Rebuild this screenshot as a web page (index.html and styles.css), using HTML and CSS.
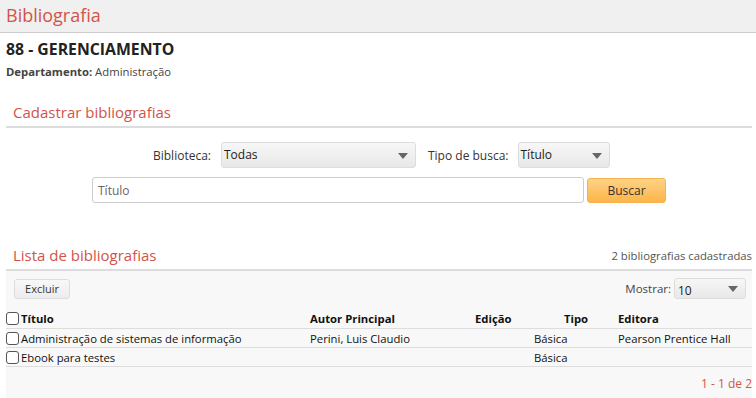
FILE: index.html
```html
<!DOCTYPE html>
<html lang="pt-BR">
<head>
    <meta charset="UTF-8">
    <meta name="viewport" content="width=device-width, initial-scale=1.0">
    <title>Bibliografia</title>
    <link rel="stylesheet" href="styles.css">
</head>
<body>
    <div class="page-header">
        <h1>Bibliografia</h1>
    </div>

    <div class="disciplina">
        <h2>88 - GERENCIAMENTO</h2>
        <p><b>Departamento:</b> Administração</p>
    </div>

    <div class="section">
        <h3 class="section-title">Cadastrar bibliografias</h3>
        <form class="search-form">
            <div class="form-row">
                <label for="biblioteca">Biblioteca:</label>
                <div class="select select-lib" id="biblioteca">Todas</div>
                <label for="tipo">Tipo de busca:</label>
                <div class="select select-tipo" id="tipo">Título</div>
            </div>
            <div class="form-row">
                <input type="text" class="search-input" placeholder="Título">
                <button type="button" class="btn-buscar">Buscar</button>
            </div>
        </form>
    </div>

    <div class="section list-section">
        <div class="section-head">
            <h3 class="section-title">Lista de bibliografias</h3>
            <span class="count">2 bibliografias cadastradas</span>
        </div>
        <div class="list-panel">
            <div class="toolbar">
                <button type="button" class="btn-excluir">Excluir</button>
                <div class="mostrar">
                    <span>Mostrar:</span>
                    <div class="select select-mostrar">10</div>
                </div>
            </div>
            <table class="biblio-table">
                <thead>
                    <tr>
                        <th class="col-titulo"><span class="check"></span>Título</th>
                        <th class="col-autor">Autor Principal</th>
                        <th class="col-edicao">Edição</th>
                        <th class="col-tipo">Tipo</th>
                        <th class="col-editora">Editora</th>
                    </tr>
                </thead>
                <tbody>
                    <tr>
                        <td><span class="check"></span>Administração de sistemas de informação</td>
                        <td>Perini, Luis Claudio</td>
                        <td></td>
                        <td>Básica</td>
                        <td>Pearson Prentice Hall</td>
                    </tr>
                    <tr>
                        <td><span class="check"></span>Ebook para testes</td>
                        <td></td>
                        <td></td>
                        <td>Básica</td>
                        <td></td>
                    </tr>
                </tbody>
            </table>
            <div class="paginacao">1 - 1 de 2</div>
        </div>
    </div>
</body>
</html>
```

FILE: styles.css
```css
body {
    margin: 0;
    font-family: "Open Sans", "Noto Sans", sans-serif;
    font-size: 12px;
    color: #222;
    background: #fff;
}
.page-header {
    background: #f0f0f0;
    border-bottom: 1px solid #ccc;
    height: 32px;
    padding: 0 6px;
}
.page-header h1 {
    margin: 0;
    font-weight: normal;
    font-size: 18px;
    line-height: 31px;
    color: #d2544a;
}
.disciplina {
    padding: 6px 6px 0;
}
.disciplina h2 {
    margin: 0;
    font-size: 15.8px;
    line-height: 20px;
    color: #222;
}
.disciplina p {
    margin: 5px 0 0;
    font-size: 11.3px;
    color: #444;
}
.section {
    margin: 21px 4px 0 6px;
}
.section-title {
    margin: 0;
    padding: 0 7px;
    font-weight: normal;
    font-size: 15px;
    line-height: 24px;
    color: #d2544a;
}
.section > .section-title,
.section-head {
    border-bottom: 2px solid #ddd;
    padding-bottom: 2px;
}
.section-head {
    display: flex;
    justify-content: space-between;
    align-items: flex-end;
    padding-bottom: 2px;
}
.count {
    color: #555;
    font-size: 11.3px;
    padding-bottom: 4px;
}
.search-form {
    padding-top: 14px;
}
.form-row {
    display: flex;
    align-items: center;
    margin-bottom: 9px;
}
.form-row label {
    color: #333;
}
.form-row label[for="biblioteca"] {
    margin-left: 147px;
    margin-right: 10px;
}
.form-row label[for="tipo"] {
    margin-left: 12px;
    margin-right: 9px;
}
.select {
    position: relative;
    box-sizing: border-box;
    height: 26px;
    line-height: 24px;
    padding: 0 22px 0 2px;
    border: 1px solid #ddd;
    border-radius: 3px;
    background: linear-gradient(#f7f7f7, #e8e8e8);
    color: #222;
    font-size: 12px;
}
.select::after {
    content: "";
    position: absolute;
    right: 7px;
    top: 10px;
    border-left: 5px solid transparent;
    border-right: 5px solid transparent;
    border-top: 6px solid #666;
}
.select-lib {
    width: 195px;
}
.select-tipo {
    width: 92px;
}
.search-input {
    box-sizing: border-box;
    margin-left: 86px;
    width: 492px;
    height: 26px;
    border: 1px solid #ccc;
    border-radius: 3px;
    padding: 0 5px;
    font-family: inherit;
    font-size: 12px;
}
.search-input::placeholder {
    color: #666;
}
.btn-buscar {
    margin-left: 3px;
    width: 79px;
    height: 25px;
    border: 1px solid #f5b350;
    border-radius: 3px;
    background: linear-gradient(#ffd285, #fdb549);
    color: #333;
    font-family: inherit;
    font-size: 12px;
}
.list-section {
    margin-top: 40px;
}
.list-panel {
    background: #f8f8f8;
    border-bottom: 2px solid #e6e6e6;
}
.toolbar {
    display: flex;
    justify-content: space-between;
    align-items: center;
    padding: 7px 6px 0 8px;
}
.btn-excluir {
    width: 56px;
    height: 20px;
    border: 1px solid #ddd;
    border-radius: 3px;
    background: linear-gradient(#f8f8f8, #ececec);
    color: #333;
    font-family: inherit;
    font-size: 11px;
    padding: 0;
}
.mostrar {
    display: flex;
    align-items: center;
    gap: 3px;
    color: #444;
    font-size: 11.5px;
}
.select-mostrar {
    width: 72px;
    height: 21px;
    line-height: 24px;
    padding-left: 3px;
}
.select-mostrar::after {
    top: 7px;
}
.biblio-table {
    width: 100%;
    border-collapse: collapse;
    margin-top: 7px;
    font-size: 11.3px;
}
.biblio-table th,
.biblio-table td {
    text-align: left;
    padding: 0;
    height: 18px;
    border-bottom: 1px solid #ddd;
    white-space: nowrap;
    color: #111;
}
.biblio-table th {
    font-weight: bold;
    height: 19px;
    padding-top: 3px;
}
.check {
    display: inline-block;
    vertical-align: -2px;
    box-sizing: border-box;
    width: 13px;
    height: 13px;
    margin-right: 2px;
    border: 1px solid #555;
    border-radius: 3px;
    background: #fff;
}
.col-titulo {
    width: 304px;
}
.col-autor {
    width: 165px;
}
.col-edicao {
    width: 59px;
}
.biblio-table th.col-tipo {
    width: 84px;
    text-align: center;
}
.paginacao {
    text-align: right;
    padding: 8px 0 6px;
    line-height: 17px;
    color: #d2544a;
}
```
